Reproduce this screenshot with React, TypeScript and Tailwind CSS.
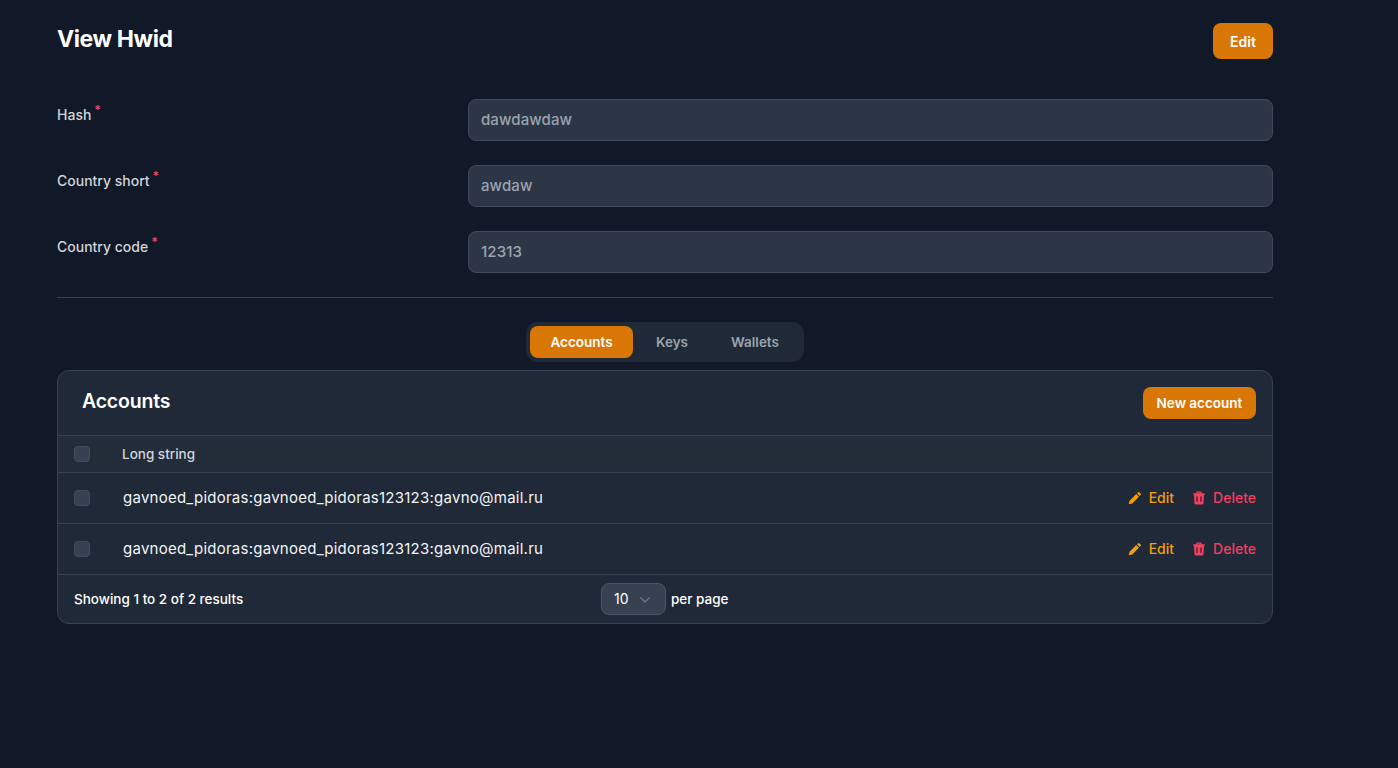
import { HiMiniChevronDown } from "react-icons/hi2";

const font = { fontFamily: "Inter, 'Noto Sans', sans-serif" };

const fields = [
  { label: "Hash", value: "dawdawdaw" },
  { label: "Country short", value: "awdaw" },
  { label: "Country code", value: "12313" },
];

const rows = ["gavnoed_pidoras:gavnoed_pidoras123123:gavno@mail.ru", "gavnoed_pidoras:gavnoed_pidoras123123:gavno@mail.ru"];

function Checkbox() {
  return <span className="block h-4 w-4 rounded border border-[#454d5b] bg-[#374151]" />;
}

function PencilIcon() {
  return (
    <svg viewBox="0 0 14 14" className="h-[14px] w-[14px]" fill="currentColor">
      <path d="M9.9 1.4a1.2 1.2 0 0 1 1.7 0l1 1a1.2 1.2 0 0 1 0 1.7l-.9.9L9 2.3l.9-.9ZM8.2 3.1l2.7 2.7-6.6 6.6-3.6.9.9-3.6 6.6-6.6Z" />
    </svg>
  );
}

function TrashIcon() {
  return (
    <svg viewBox="0 0 14 14" className="h-[14px] w-[14px]" fill="currentColor">
      <path
        fillRule="evenodd"
        d="M5.2.6h3.6c.5 0 .9.4.9.9V2.2h2.6a.7.7 0 0 1 0 1.4h-.2l-.6 8.7c-.1.7-.6 1.2-1.3 1.2H3.8c-.7 0-1.2-.5-1.3-1.2l-.6-8.7h-.2a.7.7 0 0 1 0-1.4h2.6v-.7c0-.5.4-.9.9-.9Zm.4 1.6h2.8v-.4H5.6v.4ZM5 5.2a.6.6 0 0 0-.6.6v4.6a.6.6 0 0 0 1.2 0V5.8a.6.6 0 0 0-.6-.6Zm4 0a.6.6 0 0 0-.6.6v4.6a.6.6 0 0 0 1.2 0V5.8a.6.6 0 0 0-.6-.6Z"
      />
    </svg>
  );
}

export default function App() {
  return (
    <div style={font} className="min-h-[768px] bg-[#111827] pl-[57px] pr-[125px] pt-[23px] text-white">
      {/* HEADER */}
      <div className="flex h-9 items-start justify-between">
        <h1 className="pt-[1px] text-[23px] leading-[30px] font-bold tracking-[-0.4px]">View Hwid</h1>
        <button className="h-9 w-[60px] rounded-lg bg-[#d97706] pt-px text-sm font-semibold">Edit</button>
      </div>

      {/* FORM */}
      <div className="mt-10 flex flex-col gap-6">
        {fields.map((field) => (
          <div key={field.label} className="grid grid-cols-[411px_1fr]">
            <label className="pt-2 text-sm leading-4 font-medium text-[#d1d5db]">
              {field.label}
              <sup className="ml-[3px] top-[-6px] text-[12px] font-bold text-[#e8486a]">*</sup>
            </label>
            <div className="flex h-[42px] items-center rounded-lg border border-[#414958] bg-[#2d3646] px-3 text-[15px] font-medium tracking-[0.1px] text-[#9ca3af]">
              {field.value}
            </div>
          </div>
        ))}
      </div>

      <div className="mt-6 h-px bg-[#374151]" />

      {/* TABS */}
      <div className="mt-6 flex justify-center">
        <div className="flex h-10 w-[278px] items-center rounded-xl bg-[#1f2937] px-1 text-[13.5px] font-semibold">
          <span className="flex h-8 w-[103px] items-center justify-center rounded-lg bg-[#d97706] pt-px">Accounts</span>
          <span className="w-[78px] pt-px text-center text-[#9ca3af]">Keys</span>
          <span className="w-[88px] pt-px text-center text-[#9ca3af]">Wallets</span>
        </div>
      </div>

      {/* TABLE */}
      <div className="mt-2 rounded-xl border border-[#394250] bg-[#1f2937]">
        <div className="flex h-16 items-center justify-between pl-6 pr-4">
          <h2 className="pb-[2px] text-[19.5px] font-semibold tracking-[-0.2px]">Accounts</h2>
          <button className="h-8 w-[113px] rounded-lg bg-[#d97706] pt-px text-[13.5px] font-semibold">New account</button>
        </div>

        <div className="flex h-[38px] items-center border-y border-[#374151] bg-[#222d39] px-4">
          <Checkbox />
          <span className="ml-8 pt-px text-[13.5px] font-medium text-[#d1d5db]">Long string</span>
        </div>

        {rows.map((row, i) => (
          <div key={i} className="flex h-[51px] items-center justify-between border-b border-[#374151] px-4">
            <div className="flex items-center">
              <Checkbox />
              <span className="ml-[33px] text-[15px] tracking-[0.25px] text-[#f3f4f6]">{row}</span>
            </div>
            <div className="flex items-center gap-[18px] text-sm font-medium">
              <span className="flex items-center gap-[7px] text-[#f59e0b]">
                <PencilIcon />
                Edit
              </span>
              <span className="flex items-center gap-[7px] text-[#f43f5e]">
                <TrashIcon />
                Delete
              </span>
            </div>
          </div>
        ))}

        <div className="relative flex h-12 items-center px-4 text-[13.5px] font-medium">
          <span className="pt-px">Showing 1 to 2 of 2 results</span>
          <div className="absolute left-[543px] top-2 flex items-center gap-[5px]">
            <div className="flex h-8 w-[65px] items-center justify-between rounded-lg border border-[#4b5563] bg-[#374151] pl-3 pr-[10px] text-sm font-normal">
              10
              <HiMiniChevronDown className="h-5 w-5 text-[#6b7280]" />
            </div>
            <span className="pt-px">per page</span>
          </div>
        </div>
      </div>
    </div>
  );
}
